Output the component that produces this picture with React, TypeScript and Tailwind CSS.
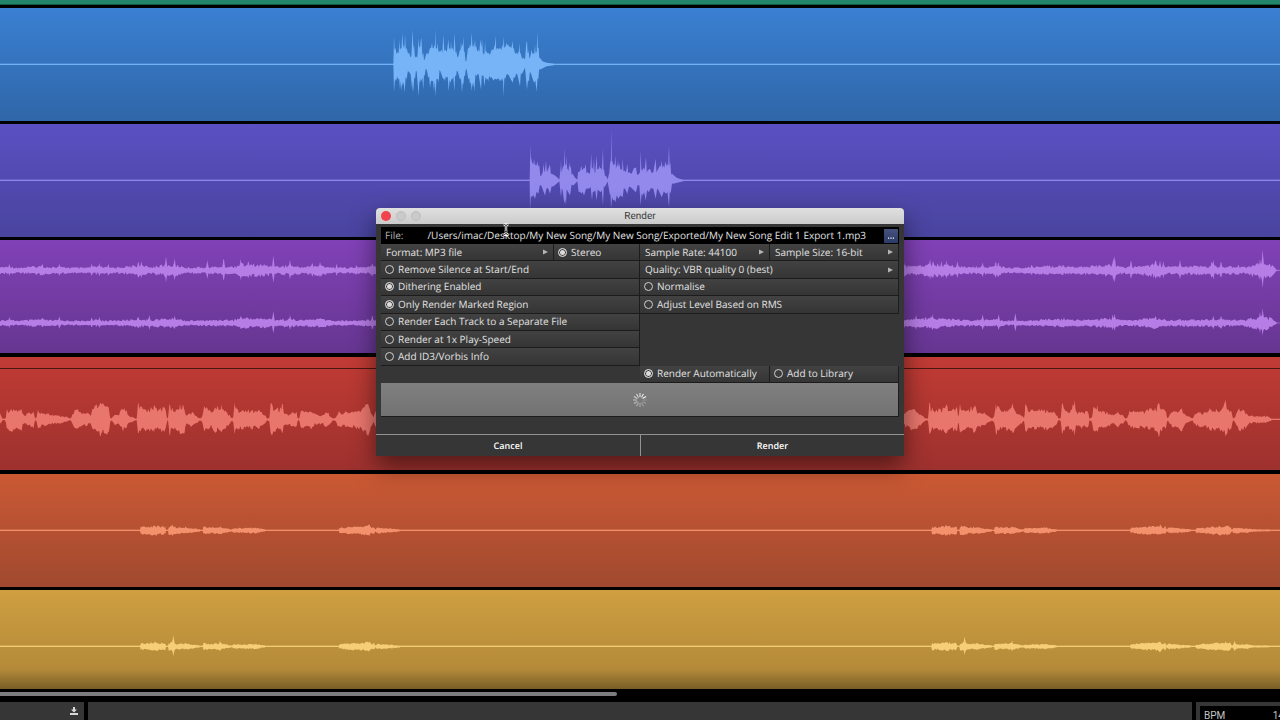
import type { ReactNode } from 'react';

type Shape = { up: number[]; down: number[] };

/* Contours are flat lists of x, height pairs on a 3840-unit wide timeline. */
const clipBlue: Shape = {
  up: [40, 0, 42, 85, 46, 50, 54, 38, 58, 75, 62, 50, 67, 95, 72, 60, 75, 90, 80, 50, 88, 35, 94, 25, 98, 105, 102, 60, 108, 25, 112, 20, 116, 80, 119, 55, 122, 70, 124, 82, 130, 35, 134, 15, 140, 35, 150, 50, 156, 65, 160, 50, 163, 60, 166, 107, 169, 50, 173, 65, 178, 40, 184, 45, 190, 90, 196, 45, 205, 75, 210, 50, 213, 70, 217, 50, 224, 92, 229, 40, 235, 25, 240, 45, 243, 70, 247, 60, 250, 85, 254, 40, 259, 10, 264, 50, 270, 60, 275, 97, 280, 60, 285, 75, 289, 55, 295, 45, 301, 75, 303, 60, 306, 78, 312, 35, 315, 70, 319, 40, 325, 35, 335, 45, 345, 60, 347, 88, 350, 50, 360, 50, 367, 60, 371, 85, 375, 55, 380, 65, 385, 60, 390, 55, 398, 70, 401, 50, 410, 35, 415, 40, 419, 65, 422, 35, 430, 20, 435, 15, 439, 65, 441, 70, 443, 35, 446, 45, 450, 20, 455, 45, 460, 35, 465, 60, 468, 40, 472, 97, 476, 50, 480, 20, 487, 10, 500, 5, 522, 2],
  down: [40, 0, 42, 82, 48, 50, 55, 45, 60, 75, 65, 80, 68, 65, 74, 85, 80, 45, 87, 22, 92, 30, 97, 80, 100, 85, 105, 45, 110, 20, 116, 95, 120, 55, 124, 50, 130, 75, 134, 35, 140, 15, 145, 40, 150, 70, 156, 50, 162, 80, 167, 97, 172, 45, 176, 55, 181, 20, 190, 45, 195, 50, 200, 40, 206, 80, 212, 55, 217, 45, 223, 80, 228, 35, 233, 20, 240, 45, 246, 85, 250, 60, 255, 35, 260, 15, 265, 45, 270, 60, 275, 80, 279, 70, 283, 82, 290, 35, 296, 30, 303, 75, 308, 35, 313, 65, 320, 45, 325, 50, 330, 40, 340, 48, 350, 45, 360, 50, 367, 50, 371, 97, 375, 45, 385, 30, 398, 55, 405, 40, 412, 30, 420, 65, 425, 30, 435, 10, 441, 75, 447, 50, 452, 25, 462, 55, 470, 82, 475, 45, 480, 15, 500, 5, 522, 2],
};

const clipViolet: Shape = {
  up: [449, 0, 451, 105, 455, 70, 458, 55, 462, 65, 468, 50, 472, 58, 478, 45, 484, 15, 488, 25, 491, 50, 495, 30, 498, 60, 503, 30, 510, 48, 515, 20, 525, 15, 533, 8, 538, 2, 542, 40, 543, 65, 546, 30, 550, 45, 553, 98, 557, 50, 560, 75, 563, 35, 568, 55, 572, 45, 578, 20, 585, 8, 592, 2, 594, 25, 600, 28, 604, 45, 606, 30, 612, 38, 617, 50, 622, 25, 630, 20, 634, 80, 637, 40, 642, 65, 646, 25, 650, 75, 654, 35, 658, 45, 662, 38, 669, 97, 672, 35, 678, 15, 683, 3, 688, 25, 691, 60, 694, 152, 697, 60, 702, 50, 706, 75, 710, 45, 714, 60, 718, 50, 724, 35, 728, 65, 733, 30, 738, 25, 742, 50, 747, 25, 755, 20, 762, 38, 768, 40, 775, 18, 780, 25, 782, 90, 786, 35, 790, 40, 798, 70, 803, 30, 810, 35, 820, 25, 827, 65, 832, 30, 840, 45, 845, 60, 850, 45, 856, 58, 862, 50, 867, 105, 871, 55, 876, 20, 890, 8, 905, 3, 915, 1],
  down: [449, 0, 450, 95, 455, 50, 465, 55, 475, 40, 484, 15, 495, 45, 505, 25, 510, 40, 520, 18, 538, 2, 543, 50, 548, 30, 553, 70, 558, 75, 562, 30, 570, 45, 580, 15, 592, 2, 596, 35, 604, 40, 612, 45, 625, 25, 632, 20, 636, 60, 641, 35, 650, 60, 656, 30, 662, 35, 669, 75, 674, 20, 683, 3, 690, 45, 693, 85, 700, 60, 706, 65, 715, 55, 728, 50, 735, 25, 742, 40, 752, 20, 768, 35, 778, 15, 782, 75, 788, 45, 797, 60, 806, 35, 820, 25, 827, 55, 836, 30, 845, 50, 858, 40, 867, 80, 872, 40, 880, 10, 915, 1],
};

const padBody = [0, 12, 28, 12, 60, 10, 120, 15, 150, 12, 250, 9, 290, 13, 330, 10, 380, 13, 420, 18, 450, 11, 470, 16, 500, 18, 530, 18, 560, 10, 640, 12, 670, 14, 700, 13, 722, 22, 760, 20, 800, 19, 825, 14, 870, 17, 900, 12, 960, 18, 1000, 10, 1060, 10, 1128, 15, 2712, 17, 2740, 15, 2790, 23, 2850, 17, 2900, 12, 2950, 13, 3000, 15, 3020, 9, 3100, 11, 3150, 16, 3250, 13, 3330, 19, 3370, 12, 3400, 12, 3465, 22, 3500, 13, 3600, 15, 3660, 15, 3730, 12, 3760, 20, 3790, 28, 3815, 20, 3830, 2, 3840, 1];
const padSpikes = [28, 20, 127, 22, 178, 20, 275, 22, 298, 22, 325, 22, 415, 30, 424, 28, 498, 42, 524, 36, 622, 30, 671, 42, 722, 34, 745, 32, 820, 44, 870, 32, 937, 26, 960, 26, 1010, 20, 1069, 18, 1117, 25, 2712, 24, 2790, 34, 2799, 32, 2824, 28, 2840, 30, 2872, 28, 2948, 24, 2987, 30, 2995, 28, 3095, 20, 3189, 20, 3340, 38, 3344, 44, 3393, 34, 3467, 36, 3480, 30, 3490, 28, 3540, 32, 3635, 30, 3640, 32, 3663, 30, 3715, 20, 3780, 34, 3788, 62];
const padSpikesLow = [28, 18, 127, 18, 178, 20, 275, 18, 298, 18, 415, 22, 448, 24, 524, 22, 722, 22, 820, 36, 870, 24, 1117, 26, 2748, 24, 2798, 26, 2948, 26, 2996, 26, 3046, 30, 3192, 18, 3338, 26, 3344, 28, 3467, 24, 3640, 22, 3663, 24, 3780, 34, 3788, 44];

const vocalBody = [0, 20, 8, 2, 17, 3, 20, 30, 35, 38, 50, 32, 64, 38, 68, 18, 75, 12, 85, 22, 100, 28, 105, 4, 109, 3, 114, 38, 122, 25, 140, 22, 160, 14, 200, 10, 208, 3, 213, 4, 222, 28, 235, 32, 245, 20, 260, 22, 272, 14, 280, 42, 295, 48, 303, 52, 315, 48, 327, 44, 331, 4, 336, 5, 345, 20, 355, 18, 366, 34, 378, 38, 383, 14, 400, 8, 408, 2, 412, 4, 415, 58, 418, 40, 430, 38, 445, 34, 462, 46, 468, 34, 478, 34, 490, 42, 497, 44, 501, 3, 504, 5, 509, 55, 514, 36, 530, 32, 540, 46, 553, 44, 557, 18, 575, 24, 590, 12, 601, 3, 607, 10, 613, 47, 620, 38, 635, 26, 645, 44, 655, 38, 664, 46, 675, 30, 690, 14, 697, 4, 701, 8, 704, 50, 710, 32, 730, 30, 740, 28, 755, 34, 765, 26, 775, 32, 785, 26, 797, 12, 801, 3, 808, 6, 813, 58, 820, 38, 828, 42, 840, 34, 847, 50, 852, 24, 865, 16, 880, 24, 890, 26, 893, 3, 898, 5, 902, 32, 920, 26, 935, 30, 945, 18, 965, 14, 980, 26, 990, 14, 1000, 3, 1007, 5, 1015, 24, 1040, 24, 1060, 26, 1085, 34, 1103, 54, 1110, 36, 1120, 8, 1128, 30, 2712, 20, 2720, 27, 2737, 38, 2750, 32, 2760, 20, 2778, 3, 2786, 4, 2789, 58, 2793, 36, 2810, 34, 2825, 34, 2839, 48, 2845, 36, 2860, 38, 2872, 40, 2875, 3, 2880, 45, 2890, 32, 2905, 32, 2915, 40, 2925, 48, 2930, 26, 2950, 26, 2962, 14, 2976, 3, 2982, 10, 2988, 46, 3000, 38, 3010, 24, 3020, 40, 3027, 30, 3038, 46, 3050, 26, 3065, 14, 3073, 4, 3076, 52, 3085, 28, 3100, 32, 3130, 30, 3145, 34, 3160, 26, 3172, 12, 3175, 2, 3183, 6, 3187, 57, 3192, 38, 3205, 24, 3218, 46, 3224, 52, 3228, 24, 3250, 28, 3265, 24, 3268, 3, 3275, 6, 3280, 38, 3290, 42, 3300, 28, 3320, 24, 3340, 14, 3355, 26, 3370, 12, 3376, 3, 3381, 6, 3388, 26, 3410, 29, 3430, 28, 3450, 34, 3470, 38, 3477, 57, 3484, 36, 3498, 30, 3501, 3, 3507, 10, 3515, 26, 3535, 28, 3545, 38, 3555, 16, 3578, 3, 3582, 14, 3595, 26, 3610, 24, 3635, 36, 3655, 32, 3670, 44, 3676, 56, 3684, 38, 3695, 30, 3699, 3, 3705, 8, 3715, 34, 3730, 38, 3745, 14, 3760, 12, 3800, 12, 3814, 3, 3816, 1, 3840, 1];
const vocalSpikes = [415, 60, 462, 46, 509, 56, 540, 48, 613, 48, 645, 44, 664, 46, 704, 52, 813, 60, 847, 58, 1103, 58, 2789, 62, 2839, 52, 2880, 48, 2925, 52, 2988, 48, 3038, 48, 3079, 52, 3187, 60, 3218, 46, 3224, 58, 3292, 44, 3477, 60, 3545, 40, 3676, 60];

const phrase = [420, 1, 422, 13, 440, 12, 465, 17, 480, 13, 496, 14, 498, 1, 504, 1, 505, 13, 518, 16, 530, 10, 555, 12, 575, 8, 600, 4, 602, 1, 608, 1, 609, 14, 630, 10, 660, 12, 680, 8, 695, 3, 700, 8, 730, 8, 765, 10, 795, 4, 798, 1, 1016, 1, 1018, 9, 1060, 13, 1090, 14, 1108, 18, 1115, 8, 1122, 15, 1126, 3, 1131, 10, 1150, 9, 1170, 7, 1198, 4, 1200, 1];
const phraseEnd = [3586, 1, 3588, 8, 3630, 12, 3660, 15, 3690, 15, 3696, 3, 3701, 11, 3720, 8, 3745, 8, 3760, 4, 3808, 3, 3812, 1, 3840, 1];
const REPEAT = 2374;
const phrases = [0, 1, ...phrase, ...phrase.map((v, i) => (i % 2 ? v : v + REPEAT)), ...phraseEnd];
const softSpikes = [465, 18, 518, 19, 1108, 20, 2839, 18, 2893, 17];
const brightSpikes = [520, 34, 660, 18, 1103, 18, 2894, 30, 3036, 17, 3477, 18, 3676, 16, 3704, 17];

function noise(n: number) {
  const v = Math.sin(n * 12.9898) * 43758.5453;
  return v - Math.floor(v);
}

function levelAt(list: number[], x: number) {
  for (let i = 2; i < list.length; i += 2) {
    if (x <= list[i]) {
      const t = (x - list[i - 2]) / Math.max(1, list[i] - list[i - 2]);
      return list[i - 1] + (list[i + 1] - list[i - 1]) * t;
    }
  }
  return 1;
}

/* Pulls the valleys between peaks towards the axis so that each peak stays thin. */
function contour({ up, down }: Shape, offset: number, cy: number) {
  const side = (list: number[], sign: number) => {
    const points: string[] = [];
    for (let i = 0; i < list.length; i += 2) {
      points.push(`${list[i] + offset} ${cy + sign * list[i + 1]}`);
      const gap = list[i + 2] - list[i];
      if (i > 0 && gap >= 3 && list[i + 1] > 30) {
        const low = Math.min(list[i + 1], list[i + 3], 62) * (0.78 + 0.2 * noise(list[i]));
        points.push(`${list[i] + offset + gap / 2} ${cy + sign * low}`);
      }
    }
    return points;
  };
  return `M${side(up, -1).join('L')}L${side(down, 1).reverse().join('L')}Z`;
}

function envelope(body: number[], spikes: number[], cy: number, rough: number, seed: number) {
  const top: string[] = [];
  const bottom: string[] = [];
  for (let x = 0; x <= 3840; x += 2) {
    const level = levelAt(body, x);
    const cellIndex = Math.floor(x / 4);
    let a = level * (1 - rough * noise(cellIndex + seed));
    let b = level * (1 - rough * noise(cellIndex * 1.7 + seed + 9));
    for (let i = 0; i < spikes.length; i += 2) {
      const near = 1 - Math.abs(x - spikes[i]) / 5;
      if (near > 0) {
        a = Math.max(a, spikes[i + 1] * near);
        b = Math.max(b, spikes[i + 1] * near * 0.85);
      }
    }
    top.push(`${x} ${(cy - a).toFixed(1)}`);
    bottom.unshift(`${x} ${(cy + b).toFixed(1)}`);
  }
  return `M${top.join('L')}L${bottom.join('L')}Z`;
}

function Wave({ paths, color, height = 339, line = true }: { paths: string[]; color: string; height?: number; line?: boolean }) {
  return (
    <svg className={`block h-full w-full ${color}`} viewBox={`0 0 3840 ${height}`} preserveAspectRatio="none" aria-hidden="true">
      {line && <rect x="0" y={height / 2 - 2.5} width="3840" height="4" fill="currentColor" opacity="0.95" />}
      {paths.map((d, i) => (
        <path key={i} d={d} fill="currentColor" />
      ))}
    </svg>
  );
}

function Track({ className, children }: { className: string; children: ReactNode }) {
  return <section className={`flex h-[113px] shrink-0 flex-col bg-linear-to-b ${className}`}>{children}</section>;
}

const cell = 'flex min-w-0 items-center border-r border-b border-[#1c1c1c] bg-linear-to-b from-[#424242] to-[#353535]';

function Toggle({ label, on = false, className }: { label: string; on?: boolean; className: string }) {
  return (
    <label className={`${cell} gap-1 pl-1 ${className}`}>
      <input
        type="checkbox"
        defaultChecked={on}
        className="size-[9px] shrink-0 appearance-none rounded-full border border-[#cfcfcf] checked:bg-[#dcdcdc] checked:shadow-[inset_0_0_0_1px_#3a3a3a]"
      />
      <span className="whitespace-nowrap">{label}</span>
    </label>
  );
}

function Picker({ name, value, className }: { name: string; value: string; className: string }) {
  return (
    <div className={`${cell} px-[5px] ${className}`}>
      <select aria-label={name} className="min-w-0 flex-1 appearance-none bg-transparent outline-none">
        <option>{`${name}: ${value}`}</option>
      </select>
      <svg className="h-[6px] w-[5px] shrink-0" viewBox="0 0 5 6" aria-hidden="true">
        <path d="M0 0.5L5 3L0 5.5Z" fill="#b5b5b5" />
      </svg>
    </div>
  );
}

function Spinner() {
  return (
    <svg className="size-[14px]" viewBox="-7 -7 14 14" role="img" aria-label="Rendering">
      {Array.from({ length: 12 }, (_, i) => (
        <line key={i} x1="0" y1="-3.4" x2="0" y2="-6.6" stroke="#f2f2f2" strokeWidth="1.1" strokeLinecap="round" opacity={1 - ((14 - i) % 12) * 0.07} transform={`rotate(${i * 30})`} />
      ))}
    </svg>
  );
}

function RenderDialog() {
  return (
    <div
      role="dialog"
      aria-labelledby="render-title"
      className="absolute top-[208px] left-1/2 w-[528px] -translate-x-1/2 rounded-t-[4px] bg-[#363636] font-['Open_Sans',sans-serif] text-[10px] text-[#e2e2e2] shadow-[0_10px_24px_rgba(0,0,0,0.5)] [&_*]:[text-rendering:geometricPrecision]"
    >
      <header className="grid h-4 grid-cols-3 items-center rounded-t-[4px] bg-linear-to-b from-[#e0e0e0] to-[#cbcbcb] px-[5px]">
        <div className="flex gap-[5px]">
          <button aria-label="Close" className="size-[10px] rounded-full bg-[#f0434b]" />
          <button aria-label="Minimise" className="size-[10px] rounded-full border border-[#bdbdbd] bg-[#cacaca]" />
          <button aria-label="Zoom" className="size-[10px] rounded-full border border-[#bdbdbd] bg-[#cacaca]" />
        </div>
        <h1 id="render-title" className="text-center font-[Roboto,sans-serif] text-[10px] text-[#3c3c3c]">Render</h1>
      </header>

      <form className="px-[5px] pt-[3px]" onSubmit={(e) => e.preventDefault()}>
        <div className="flex h-[17px] items-center bg-black pr-px pl-1">
          <label htmlFor="file" className="text-[#b4b4b4]">File:</label>
          <input id="file" readOnly value="/Users/imac/Desktop/My New Song/My New Song/Exported/My New Song Edit 1 Export 1.mp3" className="mr-[18px] min-w-0 flex-1 bg-transparent text-right outline-none" />
          <button aria-label="Browse" className="flex h-[14px] w-[14px] items-center justify-center bg-linear-to-b from-[#46527c] to-[#2b3a68]">
            <svg className="mt-1 h-[2px] w-[6px]" viewBox="0 0 6 2" aria-hidden="true">
              <path d="M0 .5h1.2v1.2H0zM2.4.5h1.2v1.2H2.4zM4.8.5H6v1.2H4.8z" fill="#fff" />
            </svg>
          </button>
        </div>

        <div className="grid h-[139px] grid-cols-[173fr_86fr_130fr_129fr] grid-rows-8">
          <Picker name="Format" value="MP3 file" className="col-start-1" />
          <Toggle label="Stereo" on className="col-start-2" />
          <Picker name="Sample Rate" value="44100" className="col-start-3" />
          <Picker name="Sample Size" value="16-bit" className="col-start-4" />
          <Toggle label="Remove Silence at Start/End" className="col-span-2 col-start-1" />
          <Picker name="Quality" value="VBR quality 0 (best)" className="col-span-2 col-start-3" />
          <Toggle label="Dithering Enabled" on className="col-span-2 col-start-1" />
          <Toggle label="Normalise" className="col-span-2 col-start-3" />
          <Toggle label="Only Render Marked Region" on className="col-span-2 col-start-1" />
          <Toggle label="Adjust Level Based on RMS" className="col-span-2 col-start-3" />
          <Toggle label="Render Each Track to a Separate File" className="col-span-2 col-start-1" />
          <Toggle label="Render at 1x Play-Speed" className="col-span-2 col-start-1" />
          <Toggle label="Add ID3/Vorbis Info" className="col-span-2 col-start-1" />
          <Toggle label="Render Automatically" on className="col-start-3 row-start-8" />
          <Toggle label="Add to Library" className="col-start-4 row-start-8" />
        </div>

        <div className="flex h-[34px] items-center justify-center border-r border-b border-[#1c1c1c] bg-linear-to-b from-[#808080] to-[#727272]">
          <Spinner />
        </div>
      </form>

      <footer className="mt-[17px] grid h-[22px] grid-cols-2 border-t border-[#929292] text-[9px] font-semibold text-white">
        <button>Cancel</button>
        <button className="border-l border-[#929292]">Render</button>
      </footer>

      <svg className="absolute top-[15px] left-[126px] h-[13px] w-[8px]" viewBox="0 0 8 13" aria-hidden="true">
        <path d="M1.5 1.2Q3.8 1.2 4 3Q4.2 1.2 6.5 1.2M4 3V10M1.5 11.8Q3.8 11.8 4 10Q4.2 11.8 6.5 11.8M2.6 8.4H5.4" fill="none" stroke="#fff" strokeWidth="2.4" />
        <path d="M1.5 1.2Q3.8 1.2 4 3Q4.2 1.2 6.5 1.2M4 3V10M1.5 11.8Q3.8 11.8 4 10Q4.2 11.8 6.5 11.8M2.6 8.4H5.4" fill="none" stroke="#1a1a1a" strokeWidth="0.8" />
      </svg>
    </div>
  );
}

export default function App() {
  return (
    <main className="relative flex h-screen flex-col overflow-hidden bg-black">
      <div className="relative flex min-h-0 flex-1 flex-col overflow-hidden">
        <div className="h-[5px] shrink-0 border-b border-[#10593f] bg-[#23866a]" />
        <Track className="mt-[3px] from-[#3a80d2] to-[#2f66a8]">
          <Wave color="text-[#76b3f7]" paths={[contour(clipBlue, 1140, 169.5)]} />
        </Track>
        <Track className="mt-[3px] from-[#5b50c3] to-[#49449e]">
          <Wave color="text-[#9389ed]" paths={[contour(clipViolet, 1140, 169.5)]} />
        </Track>
        <Track className="mt-[3px] from-[#8141b7] to-[#663691]">
          <Wave color="text-[#b77de6]" line={false} paths={[envelope(padBody, padSpikes, 91, 0.5, 3), envelope(padBody.map((v, i) => (i % 2 ? v * 0.85 : v)), padSpikesLow, 249, 0.5, 41)]} />
        </Track>
        <Track className="mt-1 from-[#c13b34] to-[#9d312e]">
          <div className="h-3 shrink-0 border-b border-[#4a1715]" />
          <div className="min-h-0 flex-1">
            <Wave color="text-[#e9766d]" height={303} paths={[envelope(vocalBody, vocalSpikes, 151.5, 0.38, 7)]} />
          </div>
        </Track>
        <Track className="mt-1 from-[#cb5934] to-[#a0492f]">
          <Wave color="text-[#f4916d]" paths={[envelope(phrases, softSpikes, 169.5, 0.4, 5)]} />
        </Track>
        <Track className="mt-[3px] from-[#cf9f41] to-[#a98236]">
          <Wave color="text-[#f6ce77]" paths={[envelope(phrases.map((v, i) => (i % 2 ? v * 0.9 : v)), brightSpikes, 169.5, 0.4, 23)]} />
        </Track>
        <div className="pointer-events-none absolute inset-x-0 bottom-0 h-5 bg-linear-to-b from-transparent to-black/30" />
      </div>

      <div className="h-[13px] shrink-0 pt-[3px]">
        <div className="h-1 w-[617px] rounded-r-full bg-[#7d7d7f]" />
      </div>

      <div className="flex h-[18px] shrink-0 gap-1">
        <div className="flex w-[84px] shrink-0 justify-end bg-[#363636] pt-[5px] pr-1.5">
          <button aria-label="Import" className="h-2 w-2">
            <svg className="block size-2" viewBox="0 0 8 8" aria-hidden="true">
              <path d="M3 0H5V2.6H7L4 5.4L1 2.6H3ZM0 6H8V8H0Z" fill="#d8d8d8" />
            </svg>
          </button>
        </div>
        <div className="min-w-0 flex-1 bg-[#363636]" />
        <div className="w-[84px] shrink-0 bg-[#363636] pt-1 pl-1">
          <div className="flex h-full items-start justify-between overflow-hidden bg-black pt-1 pl-1 font-[Roboto,sans-serif] text-[10px] leading-3 text-[#c4c4c4]">
            <span>BPM</span>
            <span className="-mr-1">14</span>
          </div>
        </div>
      </div>

      <RenderDialog />
    </main>
  );
}
